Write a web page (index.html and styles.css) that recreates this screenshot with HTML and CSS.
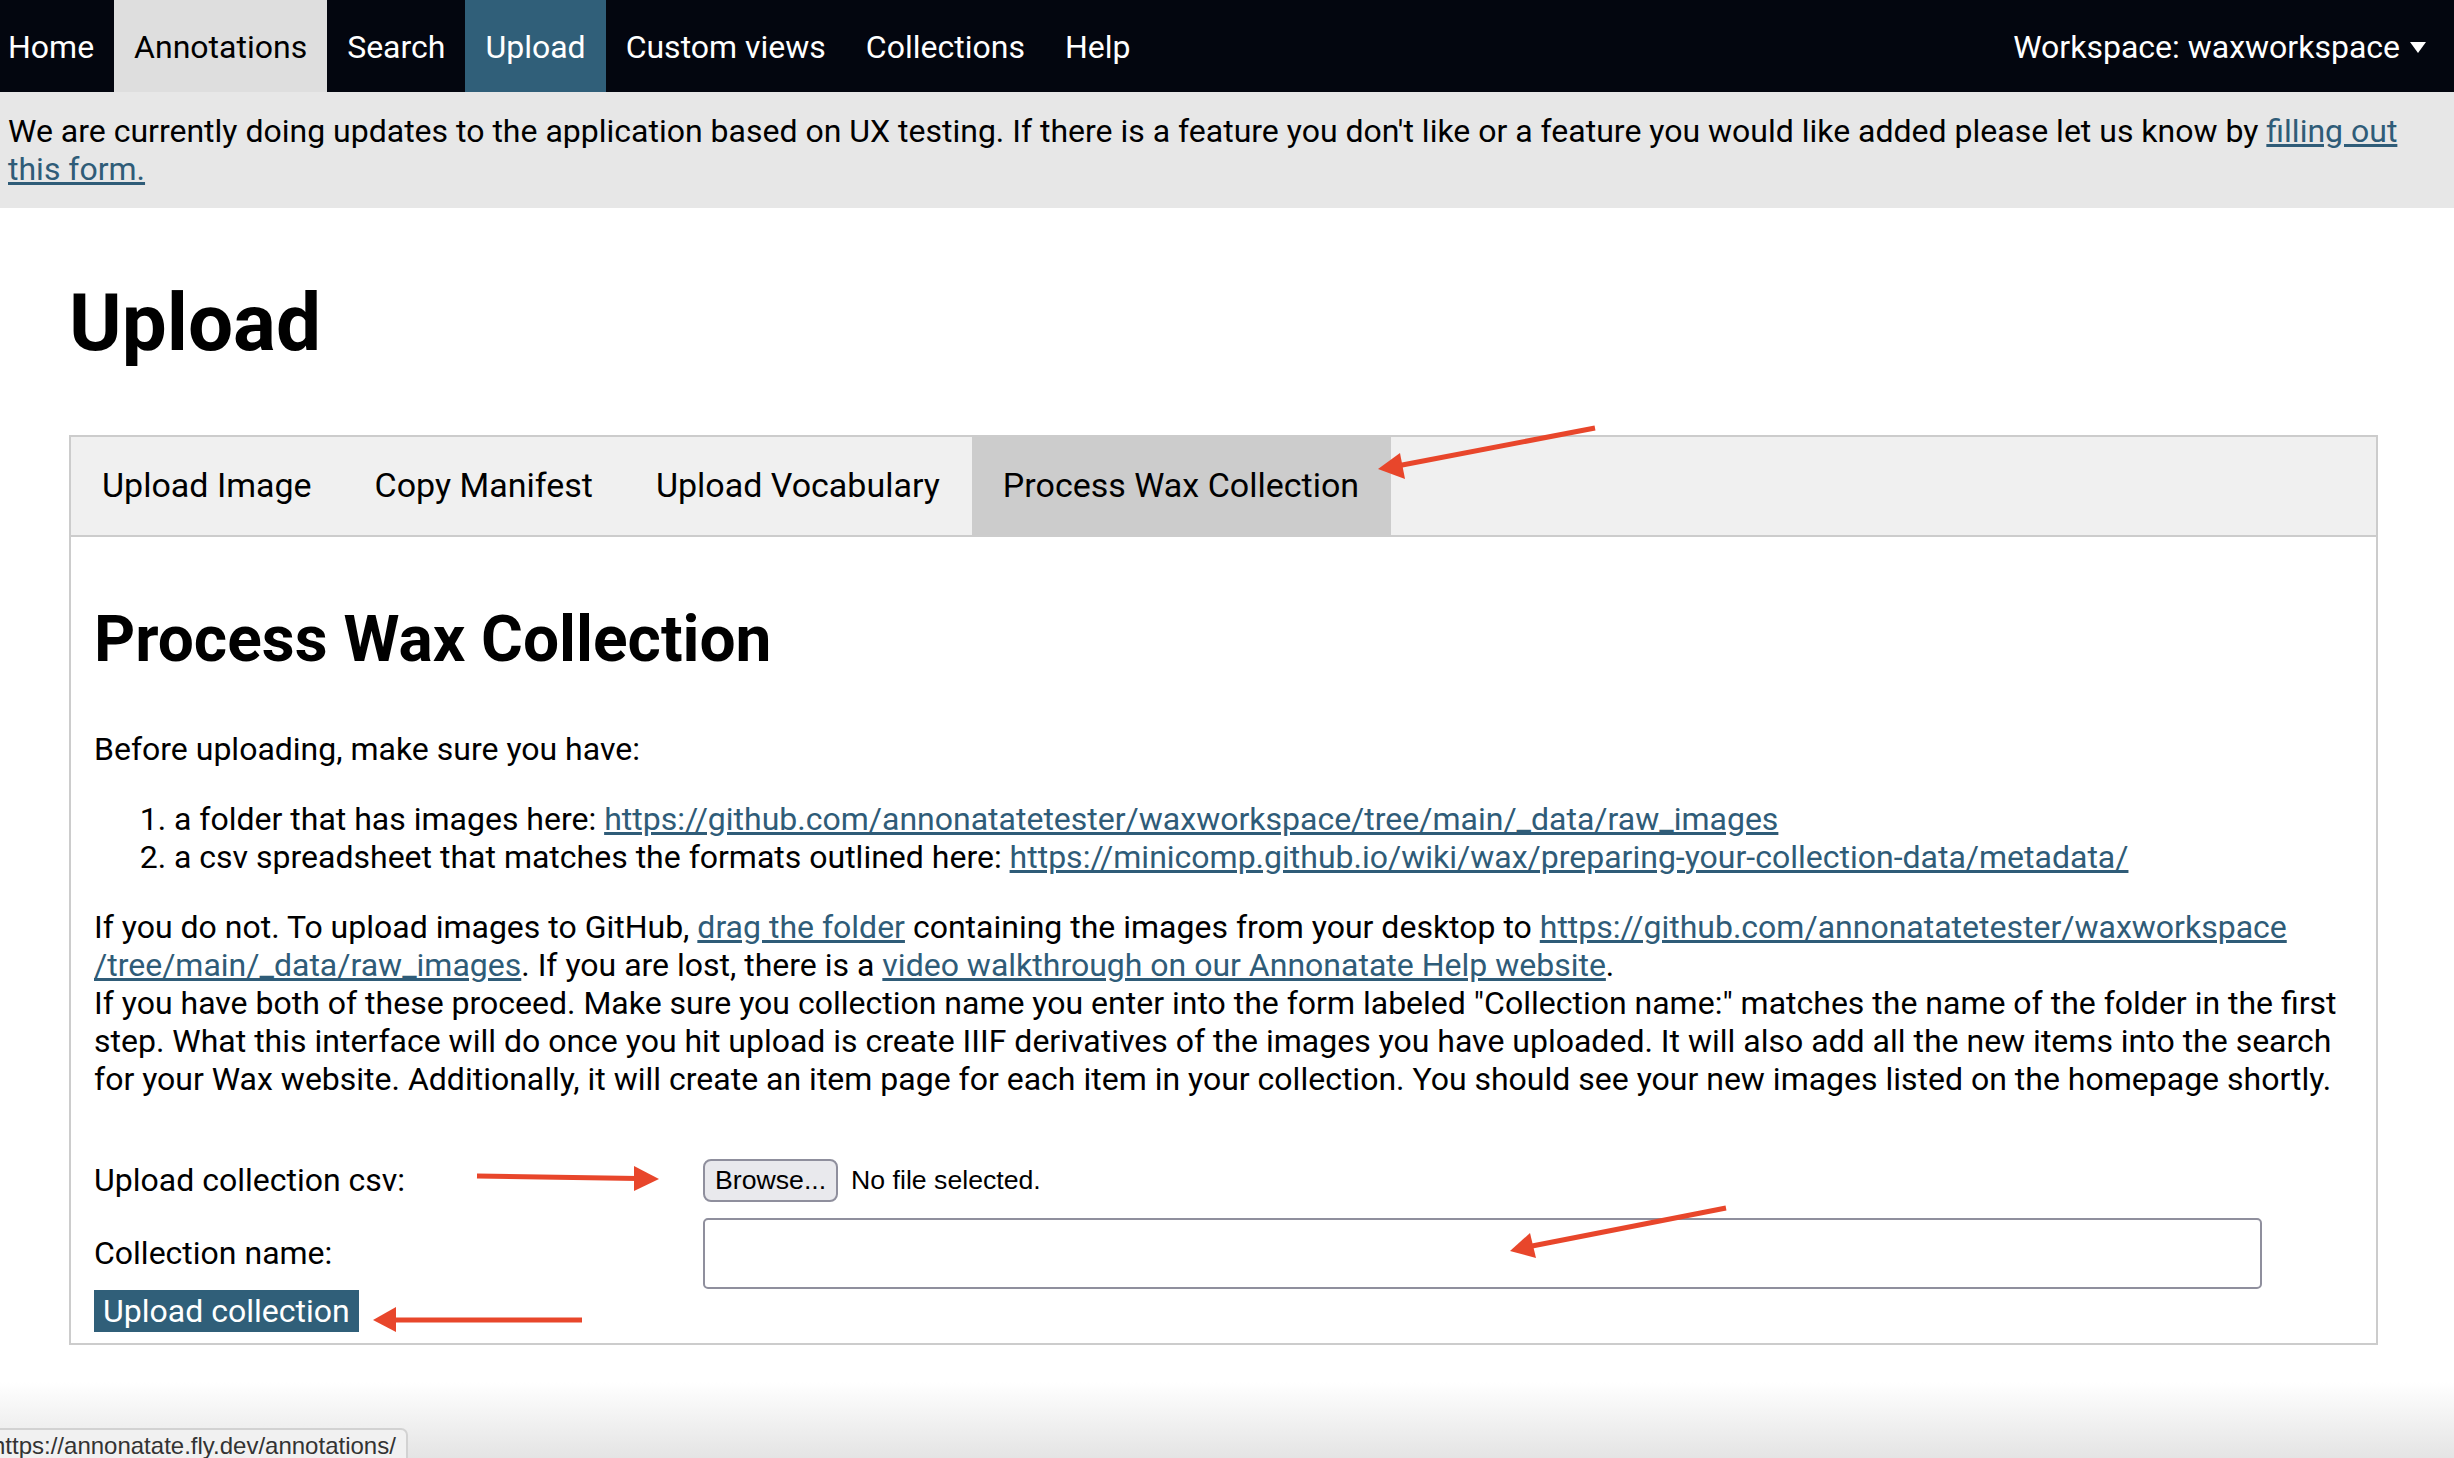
FILE: index.html
```html
<!DOCTYPE html>
<html lang="en">
<head>
<meta charset="utf-8">
<title>Upload</title>
<link rel="stylesheet" href="styles.css">
</head>
<body>
<nav class="topnav">
  <a class="nav-item nav-home" href="#">Home</a>
  <a class="nav-item nav-light" href="#">Annotations</a>
  <a class="nav-item" href="#">Search</a>
  <a class="nav-item nav-active" href="#">Upload</a>
  <a class="nav-item" href="#">Custom views</a>
  <a class="nav-item" href="#">Collections</a>
  <a class="nav-item" href="#">Help</a>
  <a class="nav-item workspace" href="#">Workspace: waxworkspace <span class="caret"></span></a>
</nav>

<div class="banner">We are currently doing updates to the application based on UX testing. If there is a feature you don't like or a feature you would like added please let us know by <a href="#">filling out this form.</a></div>

<main class="page">
  <h1 class="page-title">Upload</h1>

  <div class="tabbox">
    <div class="tabbar">
      <button class="tab">Upload Image</button>
      <button class="tab">Copy Manifest</button>
      <button class="tab">Upload Vocabulary</button>
      <button class="tab tab-active">Process Wax Collection</button>
    </div>

    <section class="panel">
      <h2 class="panel-title">Process Wax Collection</h2>
      <p class="text">Before uploading, make sure you have:</p>
      <ol class="steps">
        <li>a folder that has images here: <a href="#">https://github.com/annonatatetester/waxworkspace/tree/main/_data/raw_images</a></li>
        <li>a csv spreadsheet that matches the formats outlined here: <a href="#">https://minicomp.github.io/wiki/wax/preparing-your-collection-data/metadata/</a></li>
      </ol>
      <p class="text">If you do not. To upload images to GitHub, <a href="#">drag the folder</a> containing the images from your desktop to <a href="#">https://github.com/annonatatetester/waxworkspace<wbr>/tree/main/_data/raw_images</a>. If you are lost, there is a <a href="#">video walkthrough on our Annonatate Help website</a>.<br>If you have both of these proceed. Make sure you collection name you enter into the form labeled "Collection name:" matches the name of the folder in the first step. What this interface will do once you hit upload is create IIIF derivatives of the images you have uploaded. It will also add all the new items into the search for your Wax website. Additionally, it will create an item page for each item in your collection. You should see your new images listed on the homepage shortly.</p>

      <form class="wax-form">
        <div class="form-row row-file">
          <label class="form-label">Upload collection csv:</label>
          <div class="file-field">
            <span class="browse">Browse...</span>
            <span class="file-status">No file selected.</span>
          </div>
        </div>
        <div class="form-row">
          <label class="form-label">Collection name:</label>
          <input class="name-input" type="text">
        </div>
        <button class="submit" type="button">Upload collection</button>
      </form>
    </section>
  </div>
</main>

<svg class="annotations" width="2454" height="1458" viewBox="0 0 2454 1458">
  <g stroke="#e8462b" stroke-width="5" stroke-linecap="butt" fill="none">
    <line x1="1595" y1="428" x2="1397" y2="466"/>
    <line x1="477" y1="1176" x2="638" y2="1178.5"/>
    <line x1="1726" y1="1208" x2="1527" y2="1247"/>
    <line x1="582" y1="1320" x2="394" y2="1320"/>
  </g>
  <g fill="#e8462b">
    <polygon points="1378,469 1400,453 1405,479"/>
    <polygon points="659,1179 634,1166 634,1191"/>
    <polygon points="1510,1251 1530,1233 1536,1258"/>
    <polygon points="373,1320 396,1307 396,1332"/>
  </g>
</svg>

<div class="statusbar">https://annonatate.fly.dev/annotations/</div>
</body>
</html>
```

FILE: styles.css
```css
html {
  height: 100%;
  background: linear-gradient(to bottom, #ffffff 0, #ffffff 1382px, #e4e4e4 1458px);
}

body {
  margin: 0;
  font-family: Roboto, "Noto Sans", sans-serif;
  font-size: 32px;
  line-height: normal;
  color: #000;
  position: relative;
  min-height: 1458px;
  overflow: hidden;
}

a {
  color: #2f5c78;
  text-decoration: underline;
}

/* top navigation */
.topnav {
  display: flex;
  align-items: stretch;
  height: 92px;
  background: #03060f;
}

.nav-item {
  display: flex;
  align-items: center;
  padding: 1px 20px 0;
  color: #fff;
  text-decoration: none;
  white-space: nowrap;
}

.nav-home {
  padding-left: 8px;
}

.nav-light {
  background: #dedede;
  color: #000;
}

.nav-active {
  background: #305f79;
}

.workspace {
  margin-left: auto;
  padding-right: 28px;
}

.caret {
  display: inline-block;
  width: 0;
  height: 0;
  margin-left: 10px;
  margin-top: 2px;
  border-left: 8px solid transparent;
  border-right: 8px solid transparent;
  border-top: 11px solid #fff;
}

/* banner */
.banner {
  background: #e7e7e7;
  padding: 20px 20px 20px 8px;
}

/* page */
.page {
  padding: 0 76px 0 69px;
}

.page-title {
  font-size: 80px;
  font-weight: 700;
  line-height: normal;
  margin: 68px 0 65px;
}

.tabbox {
  border: 2px solid #cccccc;
}

.tabbar {
  display: flex;
  background: #f0f0f0;
  border-bottom: 2px solid #cccccc;
}

.tab {
  font: inherit;
  font-size: 34px;
  line-height: 37.5px;
  color: #000;
  background: transparent;
  border: 0;
  padding: 30px 32px 30px 31px;
  cursor: pointer;
}

.tab-active {
  background: #cccccc;
}

.panel {
  padding: 0 23px 11px 23px;
}

.panel-title {
  font-size: 64px;
  font-weight: 700;
  line-height: normal;
  margin: 65px 0 53px;
}

.text {
  margin: 32px 0;
}

.steps {
  margin: 32px 0;
  padding-left: 80px;
}

/* form */
.wax-form {
  margin-top: 61px;
}

.form-row {
  display: flex;
  align-items: center;
}

.row-file {
  margin-bottom: 16px;
}

.form-label {
  width: 609px;
  flex: none;
}

.file-field {
  display: flex;
  align-items: center;
  font-family: "Liberation Sans", Arial, sans-serif;
  font-size: 26.67px;
}

.browse {
  display: flex;
  align-items: center;
  height: 43px;
  box-sizing: border-box;
  padding: 0 10px;
  background: #e9e9ed;
  border: 2px solid #8f8f9d;
  border-radius: 8px;
}

.file-status {
  margin-left: 13px;
}

.name-input {
  width: 1559px;
  height: 71px;
  box-sizing: border-box;
  border: 2px solid #8f8f9d;
  border-radius: 5px;
  background: #fff;
  font: inherit;
}

.submit {
  display: block;
  font: inherit;
  line-height: normal;
  color: #fff;
  background: #305f79;
  border: 0;
  padding: 2px 9px;
  margin-top: 1px;
}

/* overlays */
.annotations {
  position: absolute;
  top: 0;
  left: 0;
  pointer-events: none;
}

.statusbar {
  position: absolute;
  left: -20px;
  top: 1428px;
  height: 44px;
  box-sizing: border-box;
  padding: 2px 10px 0 10px;
  font-family: "Liberation Sans", Arial, sans-serif;
  font-size: 24px;
  color: #333;
  background: #f1f1f1;
  border: 2px solid #d2d2d2;
  border-radius: 0 7px 0 0;
}
```
